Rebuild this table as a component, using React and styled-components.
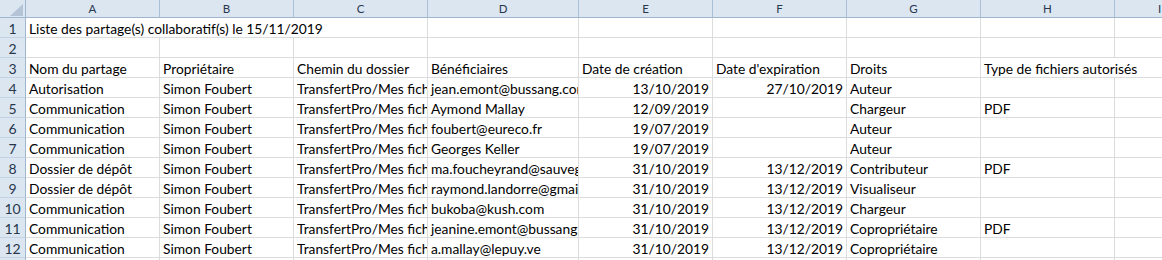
import React from 'react';
import styled, { createGlobalStyle } from 'styled-components';

const Global = createGlobalStyle`
  html, body { margin: 0; padding: 0; background: #ffffff; }
  body { font-family: Lato, "Liberation Sans", sans-serif; overflow: hidden; }
`;

const COL_WIDTHS = [134, 134, 134, 151, 134, 134, 134, 134, 90];
const LETTERS = ['A', 'B', 'C', 'D', 'E', 'F', 'G', 'H', 'I'];

const Sheet = styled.div`
  display: grid;
  grid-template-columns: 26px ${COL_WIDTHS.map((w) => `${w}px`).join(' ')};
  grid-template-rows: 18px;
  grid-auto-rows: 20px;
  width: 1162px;
  height: 260px;
  overflow: hidden;
`;

const Corner = styled.div`
  position: relative;
  background: #dce6f1;
  border-right: 1px solid #9eb6ce;
  border-bottom: 1px solid #9eb6ce;
  &::after {
    content: '';
    position: absolute;
    left: 10px;
    top: 4px;
    width: 13px;
    height: 12px;
    background: #b4c4d6;
    clip-path: polygon(100% 0, 100% 100%, 0 100%);
  }
`;

const ColHead = styled.div`
  background: #dce6f1;
  border-right: 1px solid #a9bfd6;
  border-bottom: 1px solid #9eb6ce;
  color: #27374d;
  font-size: 11.5px;
  line-height: 17px;
  text-align: center;
  overflow: hidden;
`;

const RowHead = styled.div`
  background: #dce6f1;
  border-right: 1px solid #9eb6ce;
  border-bottom: 1px solid #c3d3e5;
  color: #27374d;
  font-size: 14px;
  line-height: 17px;
  padding-top: 2px;
  text-align: center;
  box-sizing: border-box;
`;

const Cell = styled.div`
  grid-column: span ${(p) => p.$span || 1};
  border-right: 1px solid #dadcdd;
  border-bottom: 1px solid #dadcdd;
  color: #000000;
  font-size: 13.8px;
  line-height: 17px;
  padding: 2px 3px 0 3px;
  text-align: ${(p) => (p.$right ? 'right' : 'left')};
  white-space: nowrap;
  overflow: hidden;
  box-sizing: border-box;
`;

const PATH = 'TransfertPro/Mes fichiers';

const rows = [
  [{ t: 'Liste des partage(s) collaboratif(s) le 15/11/2019', span: 3 }, '', '', '', '', '', ''],
  ['', '', '', '', '', '', '', '', ''],
  ['Nom du partage', 'Propriétaire', 'Chemin du dossier', 'Bénéficiaires', 'Date de création', "Date d'expiration", 'Droits', { t: 'Type de fichiers autorisés', span: 2 }],
  ['Autorisation', 'Simon Foubert', PATH, 'jean.emont@bussang.com', { t: '13/10/2019', r: true }, { t: '27/10/2019', r: true }, 'Auteur', '', ''],
  ['Communication', 'Simon Foubert', PATH, 'Aymond Mallay', { t: '12/09/2019', r: true }, '', 'Chargeur', 'PDF', ''],
  ['Communication', 'Simon Foubert', PATH, 'foubert@eureco.fr', { t: '19/07/2019', r: true }, '', 'Auteur', '', ''],
  ['Communication', 'Simon Foubert', PATH, 'Georges Keller', { t: '19/07/2019', r: true }, '', 'Auteur', '', ''],
  ['Dossier de dépôt', 'Simon Foubert', PATH, 'ma.foucheyrand@sauvegarde.fr', { t: '31/10/2019', r: true }, { t: '13/12/2019', r: true }, 'Contributeur', 'PDF', ''],
  ['Dossier de dépôt', 'Simon Foubert', PATH, 'raymond.landorre@gmail.com', { t: '31/10/2019', r: true }, { t: '13/12/2019', r: true }, 'Visualiseur', '', ''],
  ['Communication', 'Simon Foubert', PATH, 'bukoba@kush.com', { t: '31/10/2019', r: true }, { t: '13/12/2019', r: true }, 'Chargeur', '', ''],
  ['Communication', 'Simon Foubert', PATH, 'jeanine.emont@bussang.com', { t: '31/10/2019', r: true }, { t: '13/12/2019', r: true }, 'Copropriétaire', 'PDF', ''],
  ['Communication', 'Simon Foubert', PATH, 'a.mallay@lepuy.ve', { t: '31/10/2019', r: true }, { t: '13/12/2019', r: true }, 'Copropriétaire', '', ''],
  ['', '', '', '', '', '', '', '', ''],
];

export default function App() {
  return (
    <>
      <Global />
      <Sheet>
        <Corner />
        {LETTERS.map((l) => (
          <ColHead key={l}>{l}</ColHead>
        ))}
        {rows.map((row, ri) => (
          <React.Fragment key={ri}>
            <RowHead>{ri + 1}</RowHead>
            {row.map((c, ci) => {
              const cell = typeof c === 'string' ? { t: c } : c;
              return (
                <Cell key={ci} $span={cell.span} $right={cell.r}>
                  {cell.t}
                </Cell>
              );
            })}
          </React.Fragment>
        ))}
      </Sheet>
    </>
  );
}
